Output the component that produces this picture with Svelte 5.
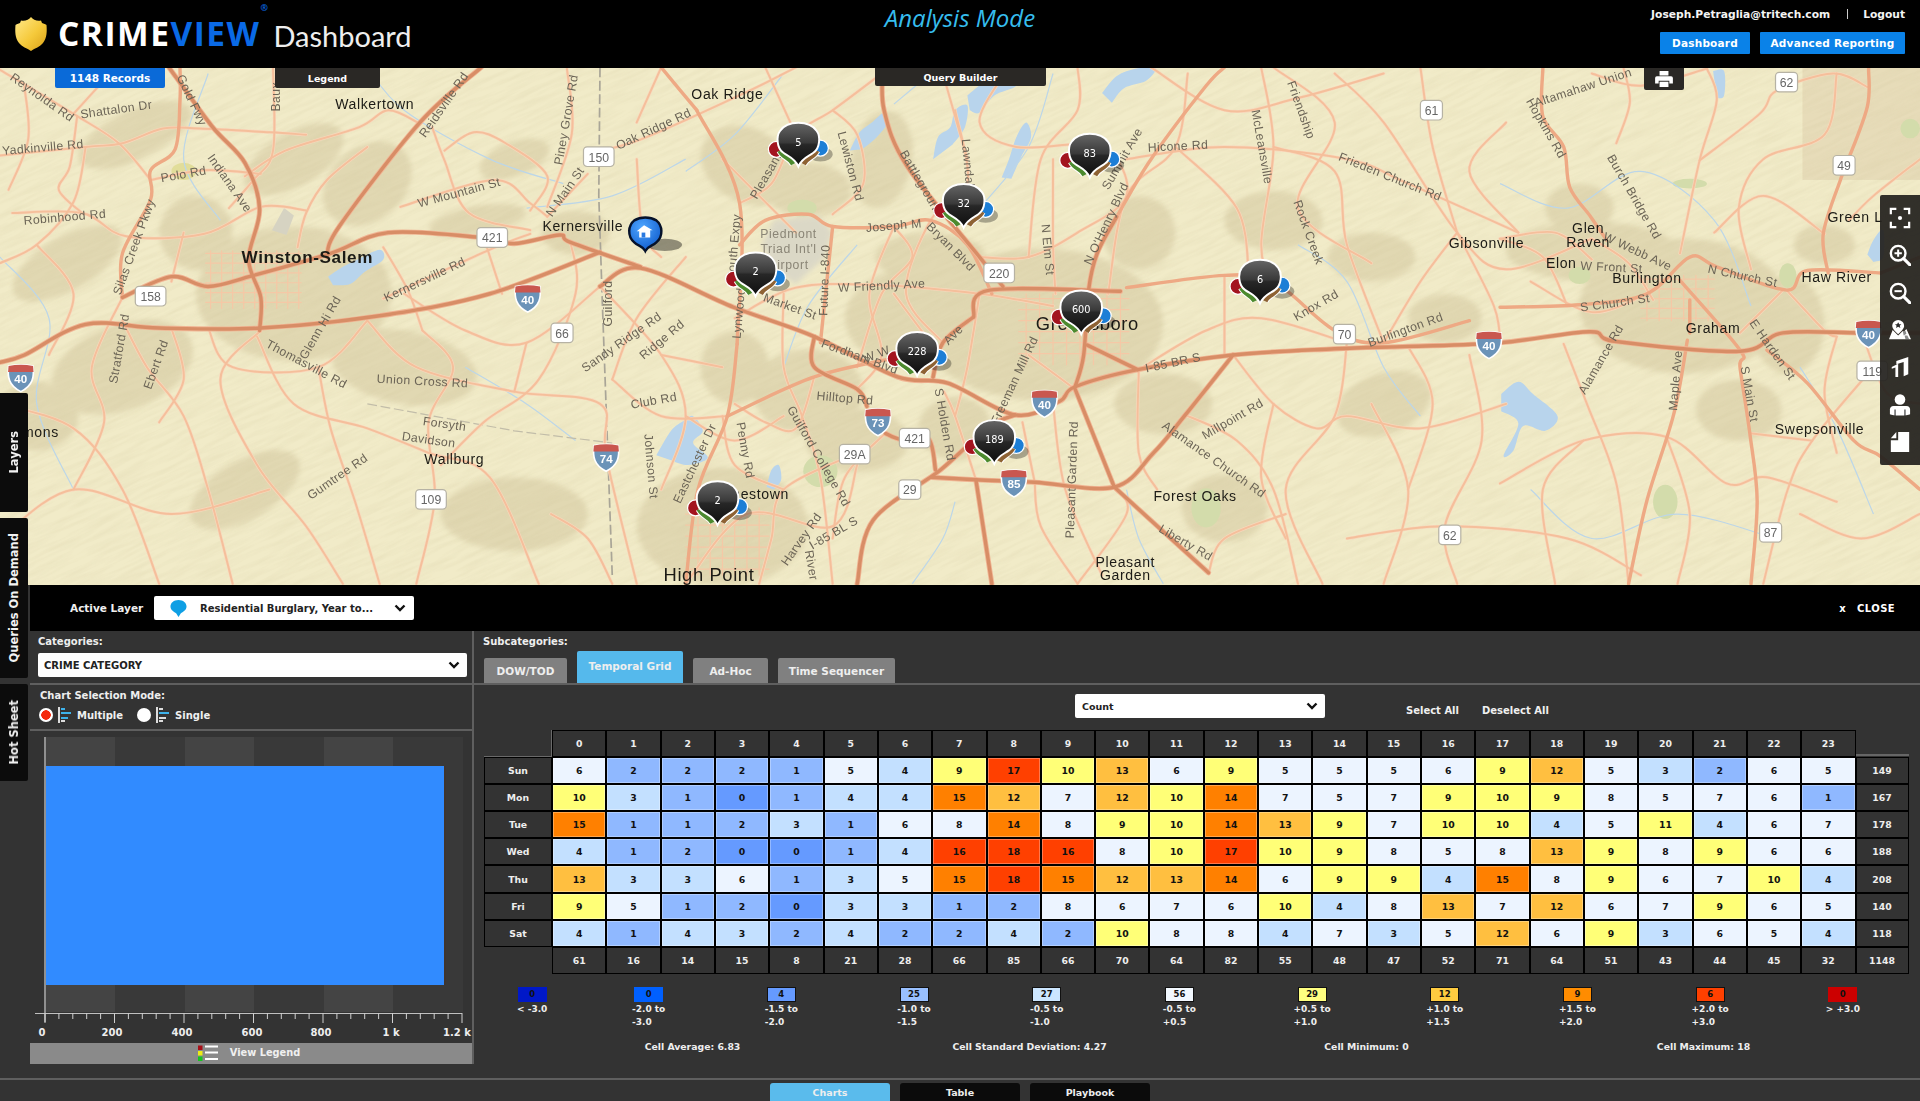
<script>
	// the map is drawn in the 1568-wide coordinates of the overview, the viewBox scales it up
	function smooth(s) {
		const p = s.trim().split(/\s+/).map((q) => q.split(',').map(Number));
		let d = `M${p[0][0]} ${p[0][1]}`;
		for (let i = 0; i < p.length - 1; i++) {
			const a = p[i - 1] || p[i];
			const b = p[i];
			const c = p[i + 1];
			const e = p[i + 2] || c;
			const x1 = (b[0] + (c[0] - a[0]) / 6).toFixed(1);
			const y1 = (b[1] + (c[1] - a[1]) / 6).toFixed(1);
			const x2 = (c[0] - (e[0] - b[0]) / 6).toFixed(1);
			const y2 = (c[1] - (e[1] - b[1]) / 6).toFixed(1);
			d += ` C${x1} ${y1} ${x2} ${y2} ${c[0]} ${c[1]}`;
		}
		return d;
	}

	const relief = [
		[240, 130, 45, 22, -30], [300, 150, 40, 30, -40], [110, 110, 50, 20, -25], [55, 215, 50, 22, -30], [160, 190, 30, 30, 0],
		[420, 130, 30, 14, -20], [390, 180, 40, 12, -10], [240, 240, 80, 55, 0], [100, 300, 60, 35, -20], [330, 300, 60, 30, 10],
		[420, 420, 60, 30, 0], [610, 135, 40, 30, 30], [660, 155, 35, 22, 0], [720, 130, 25, 40, 10], [760, 210, 45, 20, 0],
		[850, 265, 100, 62, 0], [745, 260, 55, 40, 0], [660, 320, 45, 35, 0], [600, 300, 28, 30, 0], [590, 430, 70, 48, 0],
		[700, 360, 42, 26, 0], [780, 350, 30, 26, 0], [930, 190, 30, 30, 0], [1040, 180, 40, 24, 0], [1120, 210, 36, 20, 0],
		[1300, 205, 70, 24, 0], [1290, 170, 28, 20, 0], [1375, 250, 85, 55, 0], [1460, 265, 30, 40, 0], [1420, 335, 35, 25, 0],
		[1000, 415, 35, 28, 0], [1130, 330, 40, 25, -20], [1180, 260, 30, 20, 0], [470, 190, 28, 18, 0], [950, 330, 40, 25, 0],
		[30, 340, 34, 28, 0], [200, 400, 50, 24, -30], [1490, 200, 25, 16, 0]
	];
	const water = [
		'694,123 702,108 712,100 722,92 725,100 716,112 704,122',
		'762,130 766,112 776,104 780,90 790,86 788,104 778,118',
		'790,78 806,66 826,60 830,70 812,78 800,92 792,90',
		'900,76 912,62 928,56 944,55 936,66 918,72 908,84',
		'818,145 824,130 830,112 838,100 842,112 834,128 826,146',
		'268,226 280,218 292,212 310,204 313,212 298,222 286,232 272,233',
		'536,372 548,352 558,344 566,340 574,352 566,362 578,374 562,380 548,376',
		'626,398 630,384 636,380 638,392 632,400',
		'1226,322 1240,312 1252,322 1272,340 1262,352 1244,348 1236,368 1228,372 1240,346 1226,336',
		'1525,208 1530,196 1538,188 1538,210 1530,214',
		'1399,58 1408,58 1408,78 1402,80'
	];
	const streams = [
		'300,55 330,90 400,130 460,150', '0,210 40,260 30,330 60,400', '170,60 150,130 180,180', '560,130 500,160 430,170',
		'640,60 600,110 560,140', '700,200 660,250 640,300', '760,60 730,85', '860,60 840,120 800,170',
		'1060,200 1100,230 1130,300 1160,340', '1225,150 1280,170 1340,140 1400,180 1430,250', '1470,300 1500,350 1530,420',
		'920,400 930,440 950,477', '780,410 770,440 745,477', '380,300 430,330 470,360', '1250,400 1300,440 1370,420 1450,440'
	];
	const major = [
		'0,296 20,290 70,265 130,268 213,268 310,258 400,240 490,206',
		'100,243 140,226 170,234 207,225 270,207 317,190 393,194 420,199 457,192 466,198 523,218',
		'490,234 523,219 599,251 665,275 733,308 774,313 829,339 865,328 878,316 929,302 1007,290 1090,285 1150,283 1225,280 1298,271 1320,279 1421,287 1456,272 1519,272 1568,272',
		'138,55 173,103 200,133 212,171 203,212 213,243 212,270',
		'393,55 343,100 277,185 267,210',
		'665,275 665,300 700,318 708,332',
		'829,339 807,349 768,384 713,425 700,477',
		'761,390 797,392 845,394 910,398 942,370 968,339 1007,290',
		'910,398 878,318',
		'910,398 987,468',
		'797,392 810,477',
		'723,354 736,359 758,358 764,384',
		'721,55 722,90 741,136 800,210 819,234',
		'795,259 808,237 915,238',
		'795,259 770,280 762,308',
		'912,177 896,207 889,237 885,290 878,316',
		'888,282 929,302'
	];
	const medium = [
		'147,55 147,82 143,122 123,139 123,163 100,207 100,243',
		'594,340 665,308 733,292',
		'569,90 604,166 602,281',
		'604,200 625,180 660,175 680,185 730,185 760,180 790,200 810,240',
		'680,185 670,280',
		'912,177 940,130 985,70 1000,55',
		'920,235 1000,225 1040,230 1090,270 1130,280 1200,262',
		'1225,251 1290,249 1345,240 1380,210 1402,218 1459,237 1476,221 1536,223',
		'1260,56 1260,95 1277,120 1282,153 1299,177 1312,196',
		'1526,56 1525,87 1508,134 1503,147 1489,191 1493,223',
		'1443,286 1476,313 1514,360 1536,373 1568,400',
		'1372,229 1421,286 1421,300 1429,354 1435,409 1430,477',
		'1380,245 1380,272',
		'1378,278 1367,338 1345,409 1330,477',
		'602,281 594,340 570,400 560,477',
		'540,55 569,90',
		'1568,210 1536,223'
	];
	const minor = [
		'0,57 60,93 97,117 123,147', '0,127 70,120 100,117 133,105 163,105 220,108 250,110', '10,174 67,174 103,193 167,191 213,169 250,172',
		'123,147 167,139 213,142', '20,71 23,114 7,155', '63,95 57,136 48,155 67,174', '223,56 223,123 207,147 187,170',
		'343,101 317,90 293,104 233,123 200,144', '300,120 267,147 250,174 243,202', '353,104 363,131 383,174 433,188',
		'363,123 387,108 413,117 447,144 433,172', '447,169 467,109 463,56', '327,169 403,147 433,166 447,177', '480,125 523,114 610,75 650,55',
		'447,177 480,142', '313,202 333,237 345,270', '313,244 400,204 433,191', '0,330 60,350 100,400 130,477', '100,262 120,300 150,340 170,400 190,477',
		'210,275 240,330 300,350 350,370 400,390 440,477', '213,270 180,310 210,380 250,430 280,477', '300,262 340,300 420,320 490,330 495,373 520,477',
		'345,270 370,300 350,345 355,408 340,477', '466,198 470,240 440,310 395,345 360,380', '490,234 540,290 560,340 540,400',
		'604,166 630,150 650,110 680,90 720,60', '600,260 650,235 720,233 800,240 860,250', '680,90 700,110 705,150 680,175', '650,110 625,55',
		'730,185 745,210 720,240 700,300', '640,240 640,300 655,340 670,390 680,477', '600,330 625,345 650,350 665,308', '594,340 540,340 500,310',
		'698,371 640,400 630,440 620,477', '723,354 690,390 680,440', '770,280 740,240 760,180 790,150 780,90',
		'820,60 800,100 830,120 900,120 920,160 880,190 840,210 800,210', '860,130 860,200 862,240', '905,240 920,160 960,120 970,60',
		'920,130 1000,120 1100,130 1150,150 1240,190', '1030,55 1040,120 1030,200 1040,240', '1090,60 1130,100 1190,190 1230,220 1300,195',
		'1160,55 1170,120 1190,190', '1100,280 1090,340 1050,400 1080,477', '1200,290 1210,360 1180,430 1190,477', '930,302 985,270 1030,260 1100,280',
		'1007,290 1040,330 1075,350 1100,340 1160,350 1230,330', '968,339 1010,360 1040,400 1060,477', '987,468 1000,440 1050,420', '845,394 850,430 880,477',
		'878,318 840,290', '845,394 835,345', '797,392 780,340 771,320', '860,330 870,400 900,470', '1320,117 1331,84 1326,56', '1388,131 1437,93 1451,74 1497,60 1525,71',
		'1372,207 1388,131 1402,82 1394,56', '1225,395 1293,360 1361,357 1410,395 1443,390 1500,410', '1277,281 1296,330 1320,395 1330,477',
		'1456,237 1421,272', '1530,300 1480,360 1460,400 1440,477', '1250,230 1300,255 1345,240', '1300,195 1330,215 1350,245', '1225,195 1270,190 1300,212',
		'1500,275 1490,320 1500,370', '1100,440 1180,430 1280,440 1340,470', '1120,330 1150,400 1130,477', '1230,100 1200,140 1240,190', '560,477 610,420 680,430 700,380',
		'0,440 60,400 140,420 220,400', '940,55 1000,90 1060,80 1130,60', '1190,190 1220,250 1225,280', '1040,55 1090,100 1060,170 1120,215', '450,420 480,440 500,477',
		'60,93 90,60', '70,120 60,165 30,200 0,215', '30,200 60,240 40,290', '150,190 140,230', '100,243 75,300 85,345 60,400', '140,268 150,310 130,345', '170,268 190,300 260,300 300,262',
		'260,300 270,350 290,410 310,477', '330,240 380,270 430,280 490,234', '430,280 420,320', '395,194 410,240', '520,130 525,190 540,210', '540,55 520,100', '590,130 650,190',
		'560,210 520,260 500,310', '540,290 590,300', '640,400 600,380 590,340', '560,340 600,360 640,340', '700,318 720,290 710,240 730,185', '770,60 790,130', '730,240 760,280', '800,240 790,300 780,340',
		'840,210 850,130 880,90 880,55', '960,120 1010,170 1020,225', '1040,120 1090,140 1100,200 1130,280', '1190,190 1160,230 1130,280', '1000,225 1000,290', '1040,330 1030,390 1050,440', '930,302 930,370 945,400', '880,477 920,420 910,398',
		'1150,283 1170,330 1150,400', '1280,250 1260,210 1225,195', '1300,60 1340,70 1394,56', '1400,190 1440,160 1490,191', '1459,237 1490,270 1500,275', '1520,270 1540,320 1568,330', '1429,354 1480,360', '1361,357 1380,420 1370,477',
		'1293,360 1260,400 1270,477', '1470,420 1520,440 1568,420', '1500,60 1490,110 1440,130 1420,170 1430,220', '1568,130 1530,160 1510,180'
	];
	const gridLines = [];
	for (let x = 172; x <= 244; x += 9) gridLines.push(`M${x} 205V252`);
	for (let y = 207; y <= 252; y += 8) gridLines.push(`M168 ${y}H246`);
	for (let x = 838; x <= 916; x += 11) gridLines.push(`M${x} 240V298`);
	for (let y = 244; y <= 296; y += 9) gridLines.push(`M832 ${y}H922`);
	for (let x = 570; x <= 620; x += 10) gridLines.push(`M${x} 415V470`);
	for (let y = 420; y <= 468; y += 9) gridLines.push(`M560 ${y}H628`);
	for (let x = 1345; x <= 1395; x += 10) gridLines.push(`M${x} 225V262`);
	for (let y = 228; y <= 260; y += 8) gridLines.push(`M1340 ${y}H1400`);

	const cities = [
		['Walkertown', 306, 89, 11.5], ['Oak Ridge', 594, 81, 11.5], ['Kernersville', 476, 189, 11.5], ['Winston-Salem', 251, 215, 14, 1],
		['Gibsonville', 1214, 203, 11.5], ['Elon', 1275, 219, 11.5], ['Glen', 1297, 190, 11.5], ['Raven', 1297, 202, 11.5], ['Burlington', 1345, 231, 11.5],
		['Green L', 1515, 181, 11.5], ['Haw River', 1500, 230, 11.5], ['Graham', 1399, 272, 11.5], ['Swepsonville', 1486, 355, 11.5], ['Wallburg', 371, 379, 11.5],
		['mons', 33, 357, 11.5], ['Forest Oaks', 976, 409, 11.5], ['Pleasant', 919, 463, 11.5], ['Garden', 919, 474, 11.5], ['High Point', 579, 475, 15], ['Greensboro', 888, 270, 15],
		['Jamestown', 613, 408, 11.5]
	];
	const roadLabels = [
		['Reynolda Rd', 34, 80, 35], ['Shattalon Dr', 95, 90, -8], ['Yadkinville Rd', 35, 121, -5], ['Polo Rd', 150, 143, -10], ['Indiana Ave', 187, 150, 55],
		['Robinhood Rd', 53, 178, -5], ['Silas Creek Pkwy', 110, 202, -70], ['Gold Fwy', 156, 82, 65], ['Reidsville Rd', 363, 86, -55], ['Piney Grove Rd', 463, 98, -80],
		['W Mountain St', 375, 158, -15], ['N Main St', 462, 157, -55], ['Kernersville Rd', 347, 229, -25], ['Baux', 226, 79, -90], ['Ebert Rd', 128, 298, -70],
		['Stratford Rd', 98, 285, -80], ['Thomasville Rd', 250, 298, 28], ['Union Cross Rd', 345, 312, 3], ['Glenn Hi Rd', 262, 268, -60], ['Sandy Ridge Rd', 508, 280, -35],
		['Gumtree Rd', 276, 390, -35], ['Forsyth', 363, 347, 8], ['Davidson', 350, 360, 8], ['Oak Ridge Rd', 534, 106, -25], ['Pleasant', 626, 144, -60],
		['Lewiston Rd', 694, 136, 75], ['Battleground', 752, 150, 60], ['Lawndale', 790, 136, 85], ['Joseph M', 730, 185, -5], ['Bryan Blvd', 776, 202, 45],
		['N Elm St', 855, 204, 85], ["N O'Henry Blvd", 904, 183, -65], ['Lynwood', 604, 256, -85], ['South Expy', 600, 202, -85], ['Future I-840', 674, 229, -88],
		['W Friendly Ave', 720, 234, -3], ['Market St', 645, 251, 20], ['Fordham Blvd', 702, 292, 20], ['Hilltop Rd', 690, 326, 5], ['Guilford', 497, 248, -90],
		['Club Rd', 534, 328, -10], ['Summit Ave', 917, 130, -60], ['Ave', 779, 274, -45], ['W W', 716, 290, -20], ['Freeman Mill Rd', 829, 311, -65],
		['S Holden Rd', 771, 347, 80], ['I-85 BR S', 958, 297, -12], ['Alamance Church Rd', 991, 376, 35], ['Millpoint Rd', 1007, 343, -30], ['Liberty Rd', 968, 444, 30],
		['Pleasant Garden Rd', 876, 392, -88], ['Guilford College Rd', 668, 373, 60], ['Penny Rd', 608, 368, 80], ['Eastchester Dr', 568, 379, -65], ['Johnson St', 531, 381, 85],
		['I-85 BL S', 681, 436, -30], ['Harvey Rd', 655, 441, -55], ['River', 662, 462, 80], ['Ridge Rd', 541, 278, -40], ['Altamahaw Union', 1293, 72, -18],
		['Burch Bridge Rd', 1334, 161, 60], ['W Webb Ave', 1337, 206, 25], ['W Front St', 1316, 219, 3], ['N Church St', 1423, 226, 12], ['S Church St', 1319, 248, -8],
		['Alamance Rd', 1308, 294, -60], ['Maple Ave', 1369, 311, -85], ['S Main St', 1428, 322, 80], ['E Harden St', 1447, 286, 55], ['McLeansville', 1030, 120, 80],
		['Friendship', 1062, 90, 70], ['Burlington Rd', 1148, 270, -20], ['Knox Rd', 1075, 250, -30], ['Frieden Church Rd', 1135, 145, 22], ['Hicone Rd', 962, 120, -3],
		['Rock Creek', 1068, 190, 70], ['Hopkins Rd', 1262, 105, 60]
	];
	const airport = [['Piedmont', 192], ['Triad Int\'l', 204], ['Airport', 217]];
	const shields = [
		['i', 431, 243, '40'], ['i', 17, 308, '40'], ['i', 1216, 281, '40'], ['i', 853, 329, '40'], ['i', 1526, 272, '40'], ['i', 495, 373, '74'], ['i', 717, 344, '73'], ['i', 828, 394, '85'],
		['u', 402, 194, '421'], ['u', 747, 358, '421'], ['u', 123, 242, '158'], ['u', 489, 128, '150'], ['u', 816, 223, '220'], ['u', 698, 371, '29A'], ['u', 743, 400, '29'], ['u', 1098, 273, '70'],
		['u', 1169, 90, '61'], ['u', 1184, 437, '62'], ['u', 1446, 435, '87'], ['u', 352, 408, '109'], ['u', 459, 272, '66'], ['u', 1459, 67, '62'], ['u', 1506, 135, '49'], ['u', 1529, 303, '119']
	];
	const pins = [
		[652, 116, '5'], [890, 125, '83'], [787, 166, '32'], [617, 222, '2'], [1029, 228, '6'], [883, 253, '600'], [749, 287, '228'], [812, 359, '189'], [586, 409, '2']
	];

	const hours = Array.from({ length: 24 }, (_, i) => i);
	const rows = [
		['Sun', [6, 2, 2, 2, 1, 5, 4, 9, 17, 10, 13, 6, 9, 5, 5, 5, 6, 9, 12, 5, 3, 2, 6, 5], 149],
		['Mon', [10, 3, 1, 0, 1, 4, 4, 15, 12, 7, 12, 10, 14, 7, 5, 7, 9, 10, 9, 8, 5, 7, 6, 1], 167],
		['Tue', [15, 1, 1, 2, 3, 1, 6, 8, 14, 8, 9, 10, 14, 13, 9, 7, 10, 10, 4, 5, 11, 4, 6, 7], 178],
		['Wed', [4, 1, 2, 0, 0, 1, 4, 16, 18, 16, 8, 10, 17, 10, 9, 8, 5, 8, 13, 9, 8, 9, 6, 6], 188],
		['Thu', [13, 3, 3, 6, 1, 3, 5, 15, 18, 15, 12, 13, 14, 6, 9, 9, 4, 15, 8, 9, 6, 7, 10, 4], 208],
		['Fri', [9, 5, 1, 2, 0, 3, 3, 1, 2, 8, 6, 7, 6, 10, 4, 8, 13, 7, 12, 6, 7, 9, 6, 5], 140],
		['Sat', [4, 1, 4, 3, 2, 4, 2, 2, 4, 2, 10, 8, 8, 4, 7, 3, 5, 12, 6, 9, 3, 6, 5, 4], 118]
	];
	const totals = [61, 16, 14, 15, 8, 21, 28, 66, 85, 66, 70, 64, 82, 55, 48, 47, 52, 71, 64, 51, 43, 44, 45, 32];

	function heat(v) {
		if (v === 0) return '#659aff';
		if (v <= 2) return '#8fb8ff';
		if (v <= 4) return '#c3e0ff';
		if (v <= 8) return '#ecf4ff';
		if (v <= 11) return '#ffff77';
		if (v <= 13) return '#ffbf40';
		if (v <= 15) return '#ff8000';
		return '#ff4000';
	}

	const legend = [
		['#0018c8', 0, '< -3.0', '', false],
		['#0060ff', 0, '-2.0 to', '-3.0', false],
		['#659aff', 4, '-1.5 to', '-2.0', true],
		['#99c0ff', 25, '-1.0 to', '-1.5', true],
		['#cce6ff', 27, '-0.5 to', '-1.0', true],
		['#f2f8ff', 56, '-0.5 to', '+0.5', true],
		['#ffff80', 29, '+0.5 to', '+1.0', true],
		['#ffcc40', 12, '+1.0 to', '+1.5', true],
		['#ff8c00', 9, '+1.5 to', '+2.0', true],
		['#ff4000', 6, '+2.0 to', '+3.0', true],
		['#cc0000', 0, '> +3.0', '', false]
	];
	const stats = ['Cell Average: 6.83', 'Cell Standard Deviation: 4.27', 'Cell Minimum: 0', 'Cell Maximum: 18'];

	const bands = [0, 1, 2, 3, 4, 5];
	const axisLabels = [['0', 12], ['200', 82], ['400', 152], ['600', 222], ['800', 291], ['1 k', 361], ['1.2 k', 427]];
	const ticks = Array.from({ length: 31 }, (_, i) => i);
</script>

<div class="app">
	<header class="top">
		<div class="brand">
			<svg class="shield" viewBox="0 0 32 34" width="32" height="34">
				<defs>
					<linearGradient id="gold" x1="0" y1="0" x2="1" y2="1">
						<stop offset="0" stop-color="#ffe98a" />
						<stop offset="0.55" stop-color="#f5c93a" />
						<stop offset="1" stop-color="#d99f17" />
					</linearGradient>
				</defs>
				<path d="M16 0 C18 2.5 22 4.5 26 3.5 L27 6 C28.5 7 31 7 31.5 8 C32 14 32 21 28 26 C25 30 20 31 16 34 C12 31 7 30 4 26 C0 21 0 14 .5 8 C1 7 3.5 7 5 6 L6 3.5 C10 4.5 14 2.5 16 0Z" fill="url(#gold)" />
			</svg>
			<span class="word"><span class="crime">CRIME</span><span class="view">VIEW</span><sup class="reg">®</sup></span>
			<span class="dash">Dashboard</span>
		</div>
		<div class="mode">Analysis Mode</div>
		<div class="account">
			<div class="user"><span>Joseph.Petraglia@tritech.com</span><i class="sep"></i><span class="logout">Logout</span></div>
			<div class="links"><button class="blue dash-btn">Dashboard</button><button class="blue adv-btn">Advanced Reporting</button></div>
		</div>
	</header>

	<section class="map">
		<svg class="basemap" viewBox="0 55.5 1568 422.5" preserveAspectRatio="none" font-family="'Liberation Sans', Arial, sans-serif">
			<defs>
				<filter id="soft" x="-20%" y="-20%" width="140%" height="140%"><feGaussianBlur stdDeviation="2" /></filter>
				<filter id="grain" x="0" y="0" width="100%" height="100%">
					<feTurbulence type="fractalNoise" baseFrequency="0.03 0.3" numOctaves="3" seed="7" />
					<feColorMatrix values="0 0 0 0 0.62  0 0 0 0 0.55  0 0 0 0 0.32  1.6 0 0 0 -0.62" />
				</filter>
				<linearGradient id="bubble" x1="0" y1="0" x2="0" y2="1">
					<stop offset="0" stop-color="#666" />
					<stop offset="0.45" stop-color="#3a3a3a" />
					<stop offset="0.5" stop-color="#272727" />
					<stop offset="1" stop-color="#0d0d0d" />
				</linearGradient>
				<radialGradient id="homeBlue" cx="0.4" cy="0.3" r="0.8">
					<stop offset="0" stop-color="#4ea6ff" />
					<stop offset="1" stop-color="#0a55c8" />
				</radialGradient>
				<g id="cluster">
					<ellipse cx="18" cy="10" rx="10" ry="6" fill="#000" opacity="0.3" />
					<circle cx="-18" cy="6" r="6.500" fill="#a3141f" stroke="#fff" stroke-width="1" />
					<circle cx="18" cy="5" r="6.500" fill="#1c7ed6" stroke="#fff" stroke-width="1" />
					<path d="M-15 7 C-12 13 -7 12 -4 18" fill="none" stroke="#fff" stroke-width="6" />
					<path d="M15 7 C12 13 7 12 4 18" fill="none" stroke="#fff" stroke-width="6" />
					<path d="M-15 7 C-12 13 -7 12 -4 18" fill="none" stroke="#4c8a2e" stroke-width="4.400" />
					<path d="M15 7 C12 13 7 12 4 18" fill="none" stroke="#8e6233" stroke-width="4.400" />
					<path d="M0 20 C-3 13 -8 12 -12 9 C-18 5 -18 -5 -15 -9 C-9 -18 9 -18 15 -9 C18 -5 18 5 12 9 C8 12 3 13 0 20Z" fill="url(#bubble)" stroke="#fff" stroke-width="1.600" />
				</g>
			</defs>

			<rect x="0" y="55" width="1568" height="423" fill="#f1ebc8" />
			<rect x="1472" y="55" width="96" height="92" fill="#e7dcb9" />
			<g fill="#e1d8b2" filter="url(#soft)">
				{#each relief as [x, y, rx, ry, r]}
					<ellipse cx={x} cy={y} {rx} {ry} transform="rotate({r} {x} {y})" />
				{/each}
			</g>
			<g transform="rotate(-25 784 266)" opacity="0.22">
				<rect x="-200" y="-500" width="1968" height="1532" filter="url(#grain)" />
			</g>
			<g fill="#d3dcab">
				<ellipse cx="655" cy="170" rx="12" ry="7" /><ellipse cx="1380" cy="150" rx="14" ry="4" /><ellipse cx="1290" cy="225" rx="9" ry="7" />
				<ellipse cx="670" cy="385" rx="14" ry="13" /><ellipse cx="985" cy="415" rx="12" ry="16" /><ellipse cx="1560" cy="105" rx="8" ry="8" />
				<ellipse cx="1360" cy="410" rx="10" ry="14" /><ellipse cx="1460" cy="225" rx="7" ry="10" /><ellipse cx="150" cy="140" rx="10" ry="7" fill="#e1dd9a" />
			</g>
			<path d="M632 180 L668 176 L680 190 L672 212 L650 232 L634 222 L622 200Z" fill="#dbd8c6" filter="url(#soft)" />
			<path d="M222 188 L232 170 L240 176 L234 192Z" fill="#d6d3c2" />
			<g fill="#b8d4ec">
				{#each water as w}<path d={smooth(w) + 'Z'} />{/each}
			</g>
			<g fill="none" stroke="#bcd6e8" stroke-width="1">
				{#each streams as s}<path d={smooth(s)} />{/each}
			</g>
			<path d="M490 55 L489 160 L492 250 L500 470" fill="none" stroke="#a9a597" stroke-width="1.4" stroke-dasharray="8 3" />
			<path d="M300 330 L420 352 L500 362" fill="none" stroke="#c2bda9" stroke-width="1" stroke-dasharray="8 3" />

			<g fill="none" stroke-linecap="round" stroke-linejoin="round">
				<path d={gridLines.join('')} stroke="#f5c8a6" stroke-width="1" />
				{#each minor as r}<path d={smooth(r)} stroke="#f8d8bd" stroke-width="2.6" />{/each}
				{#each minor as r}<path d={smooth(r)} stroke="#f5bf9b" stroke-width="1.6" />{/each}
				{#each medium as r}<path d={smooth(r)} stroke="#eea984" stroke-width="2.8" />{/each}
				{#each major as r}<path d={smooth(r)} stroke="#f0b594" stroke-width="4.2" />{/each}
				{#each major as r}<path d={smooth(r)} stroke="#d88d66" stroke-width="2.8" />{/each}
			</g>

			{#each roadLabels as [t, x, y, r]}
				<text class="road" x={x} y={y} transform="rotate({r} {x} {y})" text-anchor="middle" dominant-baseline="middle">{t}</text>
			{/each}
			{#each airport as [t, y]}
				<text class="air" x="644" y={y} text-anchor="middle" dominant-baseline="middle">{t}</text>
			{/each}
			{#each cities as [t, x, y, s, b]}
				<text class="city" x={x} y={y} font-size={s} font-weight={b ? 700 : 400} text-anchor="middle">{t}</text>
			{/each}
			{#each shields as [k, x, y, t]}
				{#if k === 'i'}
					<g transform="translate({x} {y})">
						<path d="M-10 -9 Q0 -11 10 -9 C11 0 10 7 0 12 C-10 7 -11 0 -10 -9Z" fill="#6b93b8" stroke="#fff" stroke-width="1.3" />
						<path d="M-10 -9 Q0 -11 10 -9 L10.4 -4 L-10.4 -4Z" fill="#c9574f" />
						<text x="0" y="5" class="ishield" text-anchor="middle">{t}</text>
					</g>
				{:else}
					<g transform="translate({x} {y})">
						<rect x={-3.5 * t.length - 2} y="-8" width={7 * t.length + 4} height="16" rx="3" fill="#fff" stroke="#b6b2a4" stroke-width="1" />
						<text x="0" y="4" class="ushield" text-anchor="middle">{t}</text>
					</g>
				{/if}
			{/each}

			{#each pins as [x, y, n]}
				<g transform="translate({x} {y})">
					<use href="#cluster" />
					<text x="0" y="3" class="pin-num" text-anchor="middle">{n}</text>
				</g>
			{/each}

			<g transform="translate(527 190)">
				<ellipse cx="16" cy="10" rx="14" ry="5" fill="#000" opacity="0.4" />
				<path d="M0 15 C-2 11 -6 11 -9 8 C-15 3 -14 -6 -9 -10 C-4 -13 4 -13 9 -10 C14 -6 15 3 9 8 C6 11 2 11 0 15Z" fill="url(#homeBlue)" stroke="#06122a" stroke-width="2" />
				<path d="M-7 -1 L-1 -6 L6 -2 L4 -2 L4 4 L-5 4 L-5 -1Z" fill="#fff" />
				<rect x="-3" y="0" width="3" height="4" fill="#2a7ae0" />
			</g>
		</svg>

		<div class="drop records">1148 Records</div>
		<div class="drop legend-tab">Legend</div>
		<div class="drop query">Query Builder</div>
		<div class="drop print">
			<svg viewBox="0 0 20 18" width="18" height="16" fill="#fff">
				<path d="M5 0h10v5H5zM2 6h16a2 2 0 0 1 2 2v6h-4v-3H4v3H0V8a2 2 0 0 1 2-2zM5 12h10v6H5z" />
			</svg>
		</div>

		<div class="tools">
			<svg viewBox="0 0 24 24" class="tool" fill="none" stroke="#fff" stroke-width="2.4">
				<path d="M2 8V2h6M16 2h6v6M22 16v6h-6M8 22H2v-6" /><circle cx="12" cy="12" r="2.300" fill="#fff" stroke="none" />
			</svg>
			<svg viewBox="0 0 24 24" class="tool" fill="none" stroke="#fff" stroke-width="2.6">
				<circle cx="10" cy="10" r="8" /><path d="M16 16l7 7" stroke-linecap="round" stroke-width="3.4" /><path d="M6 10h8M10 6v8" stroke-width="2.2" />
			</svg>
			<svg viewBox="0 0 24 24" class="tool" fill="none" stroke="#fff" stroke-width="2.6">
				<circle cx="10" cy="10" r="8" /><path d="M16 16l7 7" stroke-linecap="round" stroke-width="3.4" /><path d="M6 10h8" stroke-width="2.2" />
			</svg>
			<svg viewBox="0 0 24 24" class="tool" fill="#fff">
				<path d="M10 1a6.500 6.500 0 0 1 6.500 6.500c0 3-3.500 6-6.500 9-3-3-6.500-6-6.500-9A6.500 6.500 0 0 1 10 1z" />
				<path d="M10 3.500l1.200 2.300h2.300l-1.800 1.600.7 2.400-2.400-1.400-2.400 1.400.7-2.400-1.800-1.600h2.300z" fill="#2b2b2b" />
				<path d="M4 12l6 6 5-5 2 0 2-2 5 11H0z" />
				<path d="M15 13l3 0 1 3-3 2zM20 18l-3 0 1 4h4z" fill="#2b2b2b" opacity="0.55" />
			</svg>
			<svg viewBox="0 0 24 24" class="tool" fill="#fff">
				<path d="M8 5.500L21 1v19l-5 2V6.500L8 9zM3 12l7-3.500V23H7V12.500L3 14z" />
			</svg>
			<svg viewBox="0 0 24 24" class="tool" fill="#fff">
				<circle cx="12" cy="6" r="5.800" /><path d="M5 13h14c3 0 4 2 4 4v5c-3 2-19 2-22 0v-5c0-2 1-4 4-4z" /><path d="M6 17v7h1.200v-7zM16.800 17v7H18v-7z" fill="#2b2b2b" />
			</svg>
			<svg viewBox="0 0 24 24" class="tool" fill="#fff">
				<path d="M10 1h12v22H2V10h8z" /><path d="M2 8l6-7v7z" />
			</svg>
		</div>
	</section>

	<div class="active-bar">
		<span class="active-label">Active Layer</span>
		<div class="select layer-select">
			<svg viewBox="0 0 18 18" width="17" height="17"><path d="M9 0c5 0 8.500 3 8.500 7 0 4-4 6-6 7l-2.500 4-2.500-4c-2-1-6-3-6-7 0-4 3.500-7 8.500-7z" fill="#0f9fe4" /></svg>
			<span class="layer-name">Residential Burglary, Year to...</span>
			<svg class="chev" viewBox="0 0 12 8" width="12" height="8"><path d="M1.500 1.500L6 6l4.500-4.500" /></svg>
		</div>
		<span class="close"><b>x</b> CLOSE</span>
	</div>

	<div class="panel">
		<aside class="left">
			<div class="cats">
				<div class="lab">Categories:</div>
				<div class="select cat-select">
					<span>CRIME CATEGORY</span>
					<svg class="chev" viewBox="0 0 12 8" width="12" height="8"><path d="M1.500 1.500L6 6l4.500-4.500" /></svg>
				</div>
			</div>
			<div class="sel-mode">
				<div class="lab">Chart Selection Mode:</div>
				<div class="radios">
					<span class="radio on"></span>
					<svg class="bars-ico" viewBox="0 0 14 16" width="14" height="16"><path d="M0 0h2v16H0z" fill="#ddd" /><path d="M3 1h4v2H3zM3 5h10v2H3zM3 10h7v2H3z" fill="#3db2ea" /><path d="M3 13h4v2H3z" fill="#ddd" /></svg>
					<span class="radio-text">Multiple</span>
					<span class="radio second"></span>
					<svg class="bars-ico" viewBox="0 0 14 16" width="14" height="16"><path d="M0 0h2v16H0z" fill="#ddd" /><path d="M3 1h4v2H3zM3 10h7v2H3z" fill="#ddd" /><path d="M3 5h10v2H3z" fill="#3db2ea" /><path d="M3 13h4v2H3z" fill="#ddd" /></svg>
					<span class="radio-text">Single</span>
				</div>
			</div>
			<svg class="chart" viewBox="0 0 443 312" width="443" height="312">
				{#each bands as b}
					<rect x={16 + b * 69.500} y="6" width="69.500" height="275" fill={b % 2 ? '#393939' : '#444'} />
				{/each}
				<rect x="16" y="35" width="398" height="219" fill="#318bff" />
				<rect x="414" y="35" width="2" height="219" fill="#40352e" />
				<path d="M15 6V291" stroke="#b0b0b0" stroke-width="1.500" />
				<path d="M5 282.500H432" stroke="#c0c0c0" stroke-width="1" />
				{#each ticks as t}
					<path d={`M${15 + t * 13.900} 282V${t % 5 === 0 ? 292 : 288}`} stroke="#d0d0d0" stroke-width="1" />
				{/each}
				{#each axisLabels as [t, x]}
					<text x={x} y="305" class="axis" text-anchor="middle">{t}</text>
				{/each}
			</svg>
			<div class="view-legend">
				<svg viewBox="0 0 22 16" width="22" height="16">
					<rect x="0" y="0.500" width="4.500" height="4.500" fill="#a80e16" /><rect x="0" y="6" width="4.500" height="4.500" fill="#ecec14" /><rect x="0" y="11.500" width="4.500" height="4.500" fill="#16c420" />
					<path d="M7 1.500h13M7 7.500h13M7 14h13" stroke="#fff" stroke-width="2.200" />
				</svg>
				<span>View Legend</span>
			</div>
		</aside>

		<main class="right">
			<div class="subs">
				<div class="lab">Subcategories:</div>
				<div class="tabs">
					<span class="tab t1">DOW/TOD</span>
					<span class="tab t2 current">Temporal Grid</span>
					<span class="tab t3">Ad-Hoc</span>
					<span class="tab t4">Time Sequencer</span>
				</div>
			</div>
			<div class="controls">
				<div class="select count-select">
					<span>Count</span>
					<svg class="chev" viewBox="0 0 12 8" width="12" height="8"><path d="M1.500 1.500L6 6l4.500-4.500" /></svg>
				</div>
				<span class="sel-all">Select All</span>
				<span class="desel-all">Deselect All</span>
			</div>

			<div class="grid">
				<div class="corner"></div>
				{#each hours as h}<div class="cell head">{h}</div>{/each}
				<div class="corner2"></div>
				{#each rows as [day, values, sum]}
					<div class="cell head">{day}</div>
					{#each values as v}
						<div class="cell val" style="background:{heat(v)}">{v}</div>
					{/each}
					<div class="cell head">{sum}</div>
				{/each}
				<div class="corner3"></div>
				{#each totals as t}<div class="cell head">{t}</div>{/each}
				<div class="cell head">1148</div>
			</div>

			<div class="legend">
				{#each legend as [color, n, a, b, edge]}
					<div class="leg-item">
						<div class="swatch" class:edge style="background:{color}">{n}</div>
						<div class="leg-text">{a}{#if b}<br />{b}{/if}</div>
					</div>
				{/each}
			</div>
			<div class="stats">
				{#each stats as s}<span>{s}</span>{/each}
			</div>
		</main>
	</div>

	<nav class="bottom">
		<span class="btab current">Charts</span>
		<span class="btab">Table</span>
		<span class="btab">Playbook</span>
	</nav>

	<div class="side s1"><span>Layers</span></div>
	<div class="side s2"><span>Queries On Demand</span></div>
	<div class="side s3"><span>Hot Sheet</span></div>
</div>

<style>
	:global(body) {
		margin: 0;
		background: #333;
	}
	.app {
		position: relative;
		width: 1920px;
		height: 1101px;
		overflow: hidden;
		display: flex;
		flex-direction: column;
		background: #333;
		color: #f0f0f0;
		font-family: 'DejaVu Sans', Verdana, sans-serif;
	}

	/* header */
	.top {
		height: 68px;
		flex: none;
		background: #000;
		display: grid;
		grid-template-columns: 1fr auto 1fr;
	}
	.brand {
		display: flex;
		align-items: center;
		padding-left: 15px;
	}
	.word {
		font-family: 'Open Sans', sans-serif;
		font-weight: 700;
		font-size: 33.500px;
		letter-spacing: 1.500px;
		margin-left: 11px;
		position: relative;
		top: -1px;
	}
	.crime {
		color: #fff;
	}
	.view {
		color: #0a6ae6;
	}
	.reg {
		color: #0a6ae6;
		font-size: 9px;
		position: relative;
		top: -9px;
		vertical-align: top;
		margin-left: 0;
	}
	.dash {
		font-family: Lato, sans-serif;
		font-weight: 400;
		font-size: 29px;
		color: #eee;
		margin-left: 4px;
		position: relative;
		top: 1px;
	}
	.mode {
		font-family: 'Open Sans', sans-serif;
		font-style: italic;
		font-size: 24px;
		color: #36bdee;
		padding-top: 1px;
	}
	.account {
		justify-self: end;
		padding-right: 15px;
		display: flex;
		flex-direction: column;
		align-items: flex-end;
	}
	.user {
		display: flex;
		align-items: center;
		height: 28px;
		font-size: 10.700px;
		font-weight: 700;
		color: #f4f4f4;
	}
	.sep {
		width: 1px;
		height: 10px;
		background: #ccc;
		margin: 0 15px 0 17px;
	}
	.links {
		display: flex;
		gap: 10px;
		margin-top: 4px;
	}
	.blue {
		border: 0;
		border-radius: 1px;
		height: 22px;
		padding: 0;
		background: #0a82e8;
		color: #fff;
		font: 700 10.500px 'DejaVu Sans', Verdana, sans-serif;
		letter-spacing: 0.2px;
	}
	.dash-btn {
		width: 90px;
	}
	.adv-btn {
		width: 145px;
	}

	/* map */
	.map {
		position: relative;
		height: 517px;
		flex: none;
		overflow: hidden;
		background: #f1ebc8;
	}
	.basemap {
		display: block;
		width: 100%;
		height: 100%;
	}
	.city {
		fill: #1c1b16;
		letter-spacing: 0.5px;
	}
	.road {
		fill: #6b6456;
		font-size: 10px;
		letter-spacing: 0.3px;
	}
	.air {
		fill: #8a8576;
		font-size: 10px;
		letter-spacing: 0.5px;
	}
	.ishield {
		fill: #fff;
		font-size: 9.500px;
		font-weight: 700;
	}
	.ushield {
		fill: #666;
		font-size: 10px;
	}
	.pin-num {
		fill: #fff;
		font-family: 'DejaVu Sans', sans-serif;
		font-size: 8px;
	}
	.drop {
		position: absolute;
		top: 0;
		display: flex;
		align-items: center;
		justify-content: center;
		color: #fff;
		font-weight: 700;
		font-size: 10px;
		background: #2a2825;
		border-radius: 0 0 2px 2px;
	}
	.records {
		left: 55px;
		width: 110px;
		height: 20px;
		background: #0a6ad8;
		font-size: 10.500px;
	}
	.legend-tab {
		left: 275px;
		width: 105px;
		height: 20px;
		font-size: 9.500px;
	}
	.query {
		left: 875px;
		width: 171px;
		height: 18px;
		font-size: 9.500px;
	}
	.print {
		left: 1644px;
		width: 40px;
		height: 22px;
	}
	.tools {
		position: absolute;
		right: 0;
		top: 127px;
		width: 40px;
		height: 270px;
		box-sizing: border-box;
		padding: 12px 0 12px;
		background: rgba(35, 33, 30, 0.93);
		border-radius: 2px 0 0 2px;
		display: flex;
		flex-direction: column;
		align-items: center;
		justify-content: space-between;
	}
	.tool {
		width: 22px;
		height: 22px;
	}

	/* active layer bar */
	.active-bar {
		height: 46px;
		flex: none;
		margin-left: 30px;
		background: #000;
		display: flex;
		align-items: center;
		font-size: 10.500px;
		font-weight: 700;
	}
	.active-label {
		margin-left: 40px;
		width: 84px;
	}
	.select {
		box-sizing: border-box;
		background: #fff;
		color: #222;
		height: 24px;
		border-radius: 2px;
		display: flex;
		align-items: center;
		font-size: 10px;
		font-weight: 700;
	}
	.layer-select {
		width: 260px;
		padding: 0 8px 0 16px;
	}
	.layer-name {
		margin-left: 13px;
		flex: 1;
	}
	.chev {
		fill: none;
		stroke: #111;
		stroke-width: 2.400;
		margin-left: auto;
	}
	.close {
		margin-left: auto;
		margin-right: 25px;
		font-size: 10px;
		font-weight: 700;
		letter-spacing: 0.4px;
		color: #fff;
	}
	.close b {
		margin-right: 7px;
	}

	/* panel */
	.panel {
		height: 447px;
		flex: none;
		box-sizing: border-box;
		padding-left: 30px;
		display: flex;
	}
	.left {
		width: 444px;
		height: 433px;
		flex: none;
		box-sizing: border-box;
		border-right: 2px solid #5f5f5f;
		display: flex;
		flex-direction: column;
	}
	.lab {
		font-size: 10px;
		font-weight: 700;
		color: #eee;
	}
	.cats {
		height: 54px;
		flex: none;
		box-sizing: border-box;
		border-bottom: 2px solid #5f5f5f;
		padding: 5px 0 0 8px;
	}
	.cat-select {
		width: 429px;
		margin-top: 6px;
		padding: 0 7px 0 6px;
		font-size: 10px;
	}
	.sel-mode {
		height: 46px;
		flex: none;
		box-sizing: border-box;
		border-bottom: 2px solid #5f5f5f;
		padding: 5px 0 0 10px;
	}
	.radios {
		display: flex;
		align-items: center;
		margin-top: 6px;
		font-size: 10px;
		font-weight: 700;
	}
	.radio {
		width: 14px;
		height: 14px;
		border-radius: 50%;
		background: #fff;
		box-sizing: border-box;
		margin-left: -1px;
	}
	.radio.on {
		background: radial-gradient(circle, #f52a0c 0 4.500px, #fff 5px);
	}
	.radio.second {
		margin-left: 14px;
	}
	.bars-ico {
		margin-left: 5px;
	}
	.radio-text {
		margin-left: 5px;
	}
	.chart {
		display: block;
		flex: none;
	}
	.axis {
		fill: #eee;
		font-size: 10px;
		font-weight: 700;
	}
	.view-legend {
		height: 21px;
		flex: none;
		background: #8a8a8a;
		display: flex;
		align-items: center;
		justify-content: center;
		gap: 10px;
		font-size: 9.800px;
		font-weight: 700;
		padding: 0 4px 2px 0;
		box-sizing: border-box;
	}
	.right {
		flex: 1;
		min-width: 0;
		margin-left: 1px;
	}
	.subs {
		height: 54px;
		box-sizing: border-box;
		border-bottom: 2px solid #5f5f5f;
		padding: 5px 0 0 9px;
		margin-left: -1px;
	}
	.tabs {
		display: flex;
		align-items: flex-end;
		height: 33px;
		margin: 3px 0 0 1px;
	}
	.tab {
		display: flex;
		align-items: center;
		justify-content: center;
		background: #808080;
		height: 25px;
		border-radius: 2px 2px 0 0;
		font-size: 10.500px;
		font-weight: 700;
		color: #eee;
		margin-right: 10px;
	}
	.tab.current {
		background: #55b9ec;
		height: 32px;
		padding-bottom: 2px;
		box-sizing: border-box;
	}
	.t1 {
		width: 83px;
	}
	.t2 {
		width: 106px;
	}
	.t3 {
		width: 75px;
	}
	.t4 {
		width: 117px;
	}
	.controls {
		height: 45px;
		box-sizing: border-box;
		padding-top: 9px;
		display: flex;
		font-size: 10px;
		font-weight: 700;
	}
	.count-select {
		width: 250px;
		margin-left: 600px;
		padding: 0 7px;
		font-size: 9.500px;
	}
	.sel-all {
		margin: 11px 0 0 81px;
		width: 76px;
	}
	.desel-all {
		margin-top: 11px;
	}
	.grid {
		display: grid;
		grid-template-columns: 68px repeat(24, 54.320px) 53px;
		grid-auto-rows: 27.100px;
		margin-left: 9px;
		height: 244px;
	}
	.cell {
		box-sizing: border-box;
		border: 1.500px solid #000;
		display: flex;
		align-items: center;
		justify-content: center;
		font-size: 9.300px;
		font-weight: 700;
	}
	.head {
		background: #333;
		color: #eee;
	}
	.val {
		color: #111;
		box-shadow: inset 0 0 0 1px rgba(255, 255, 255, 0.3);
	}
	.corner {
		box-sizing: border-box;
		border-right: 1px solid #6a6a6a;
		border-bottom: 1px solid #6a6a6a;
	}
	.corner2 {
		border-bottom: 2px solid #666;
		margin-bottom: 1px;
	}
	.legend {
		display: grid;
		grid-template-columns: 100.300px repeat(10, 132.700px);
		margin: 13px 0 0 7px;
		height: 46px;
	}
	.leg-item {
		justify-self: center;
		font-size: 9px;
		font-weight: 700;
		line-height: 13px;
		color: #eee;
	}
	.swatch {
		box-sizing: border-box;
		width: 29px;
		height: 15px;
		margin: 0 auto 1px;
		color: #111;
		display: flex;
		align-items: center;
		justify-content: center;
		font-size: 8.500px;
	}
	.swatch.edge {
		border: 1.500px solid #111;
	}
	.stats {
		display: grid;
		grid-template-columns: repeat(4, 337px);
		margin: 8px 0 0 49px;
		justify-items: center;
		font-size: 9.300px;
		font-weight: 700;
		color: #eee;
	}

	/* bottom tabs */
	.bottom {
		flex: 1;
		border-top: 2px solid #5f5f5f;
		display: flex;
		justify-content: center;
		gap: 10px;
		padding-top: 3px;
	}
	.btab {
		width: 120px;
		background: #0b0b0b;
		border-radius: 3px 3px 0 0;
		display: flex;
		align-items: center;
		justify-content: center;
		font-size: 9.500px;
		font-weight: 700;
		color: #eee;
	}
	.btab.current {
		background: #5abbec;
	}

	/* left rail */
	.side {
		position: absolute;
		left: 0;
		width: 28px;
		background: #0c0c0c;
		border-radius: 0 2px 2px 0;
		display: flex;
		align-items: center;
		justify-content: center;
		font-size: 11.500px;
		font-weight: 700;
		color: #f2f2f2;
	}
	.side span {
		writing-mode: vertical-rl;
		transform: rotate(180deg);
	}
	.s1 {
		top: 393px;
		height: 119px;
	}
	.s2 {
		top: 518px;
		height: 160px;
	}
	.s3 {
		top: 684px;
		height: 97px;
	}
</style>
